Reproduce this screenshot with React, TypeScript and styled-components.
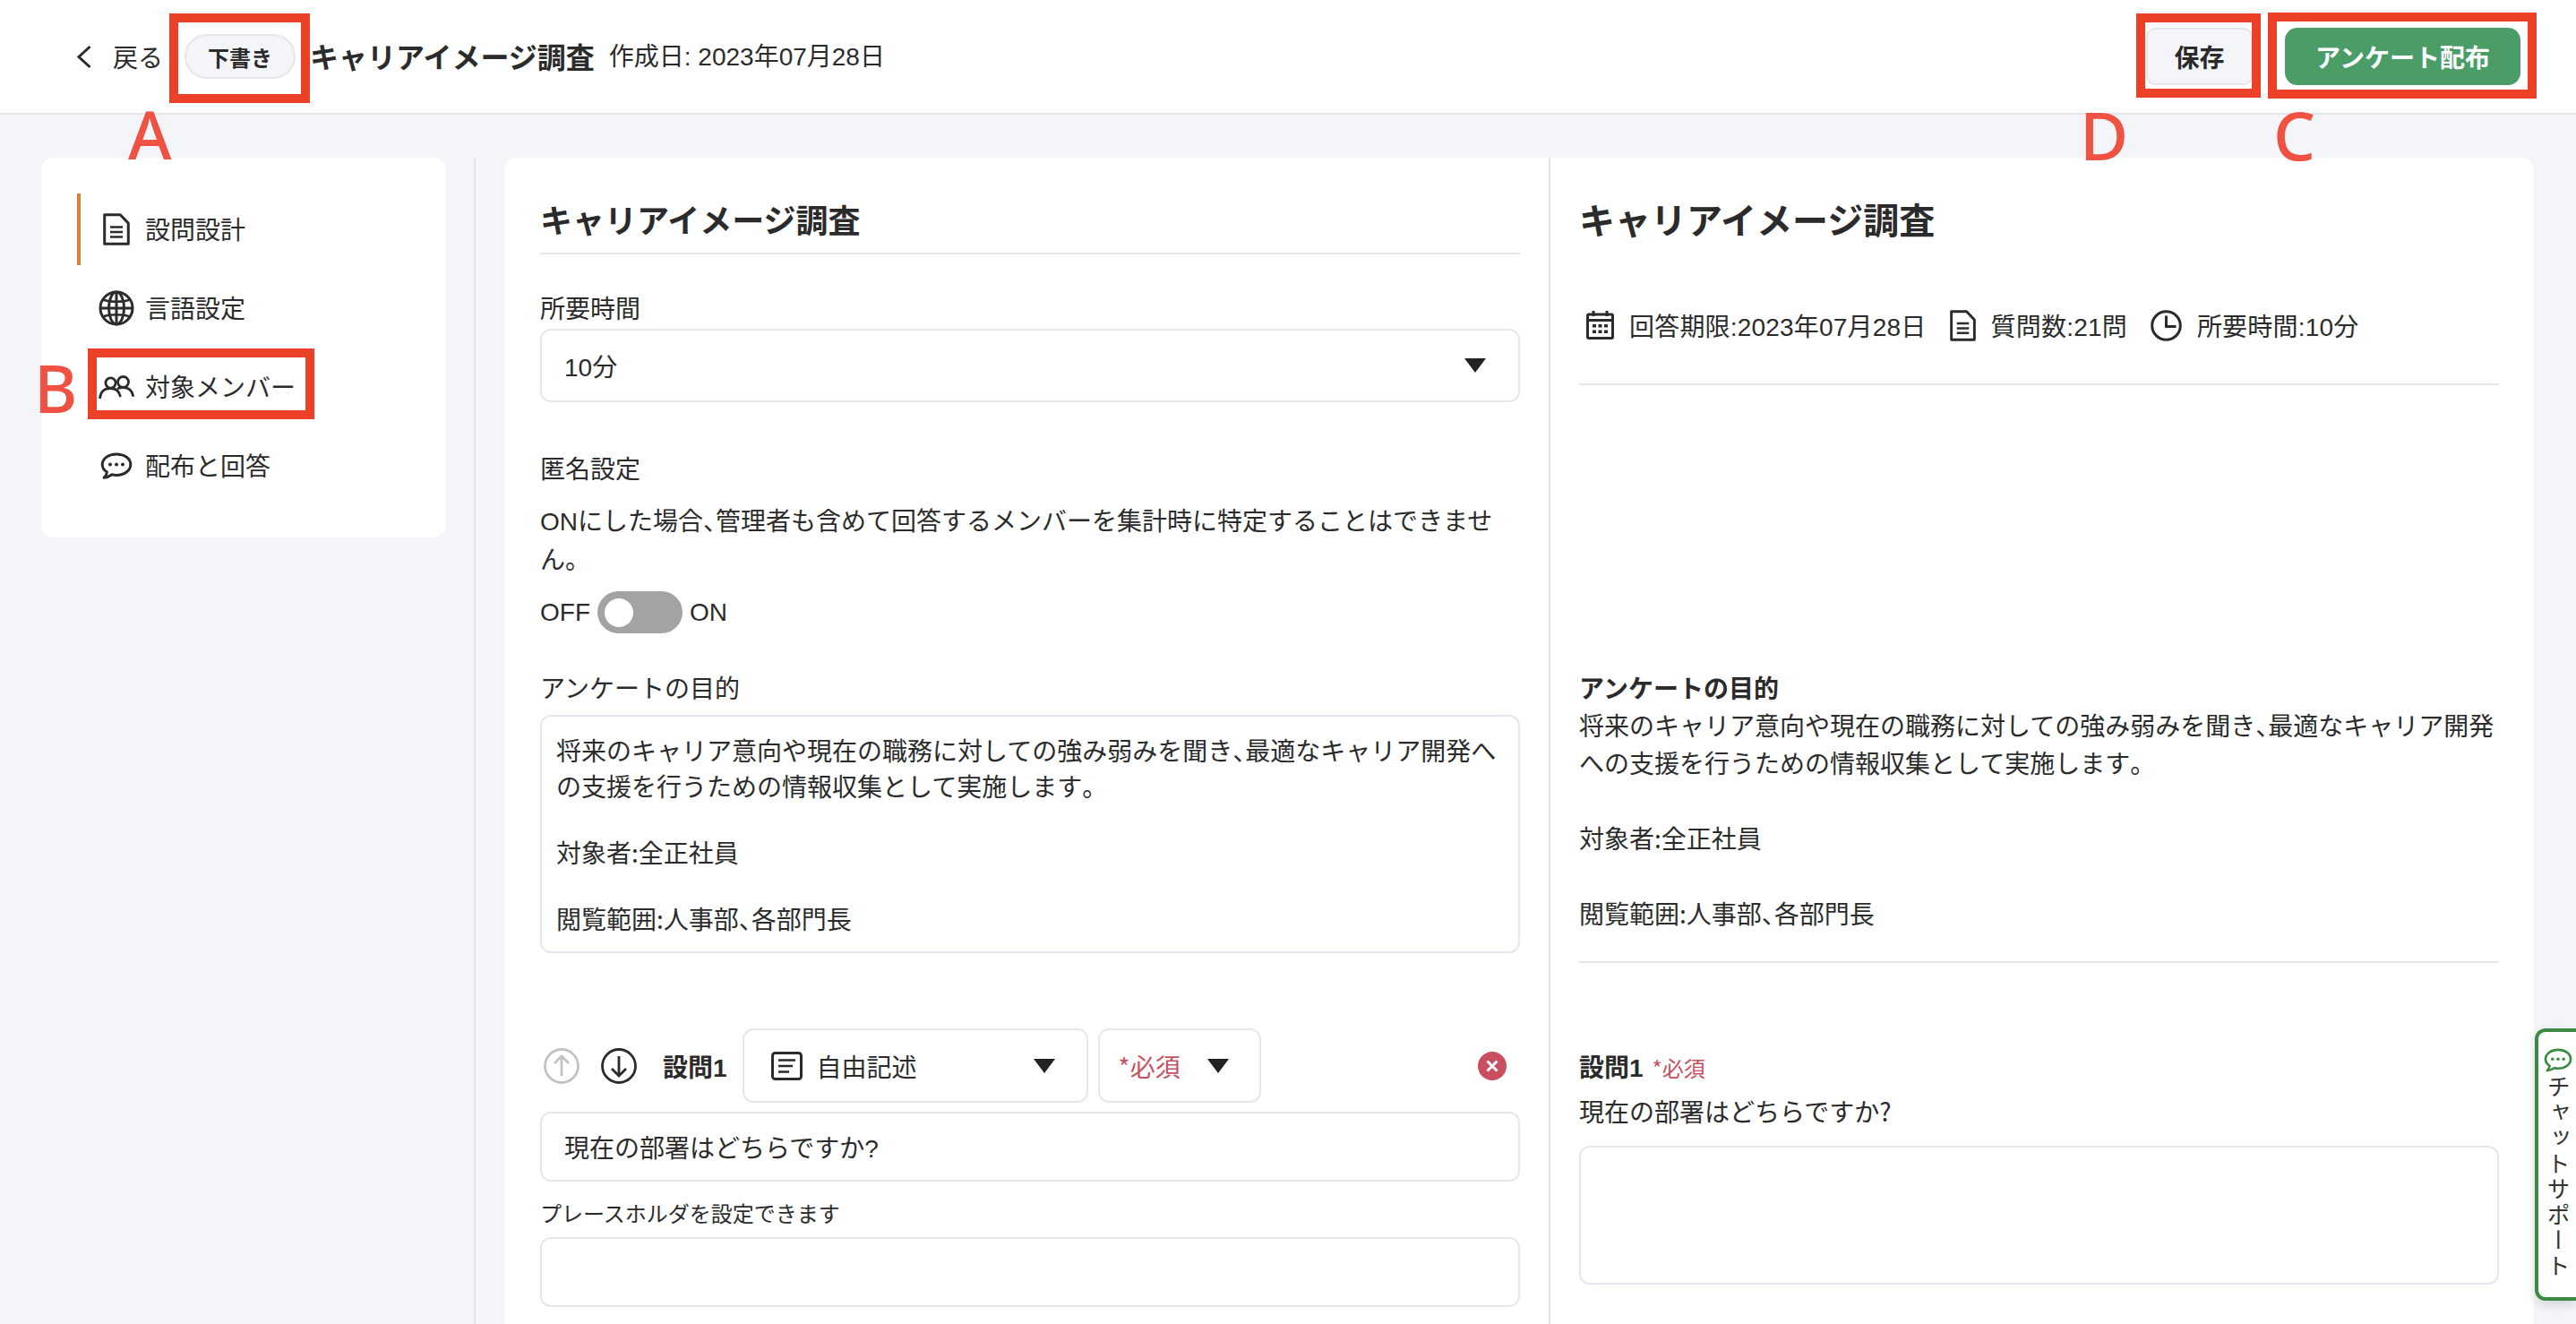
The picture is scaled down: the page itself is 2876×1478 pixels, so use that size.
import React from "react";
import styled, { createGlobalStyle } from "styled-components";

const JP = `"Noto Sans CJK JP", sans-serif`;
const LATIN = `"Liberation Sans", "Noto Sans CJK JP", sans-serif`;

const GlobalStyle = createGlobalStyle`
  html, body {
    margin: 0;
    padding: 0;
    background: #f4f5f9;
  }
  body {
    font-family: ${JP};
    font-size: 28px;
    color: #2b2b2b;
  }
  * {
    box-sizing: border-box;
  }
`;

const Page = styled.div`
  position: relative;
  width: 2876px;
  height: 1478px;
  overflow: hidden;
  background: #f4f5f9;
`;

/* header */
const Header = styled.header`
  display: flex;
  align-items: center;
  height: 128px;
  padding: 0 62px 0 85px;
  background: #ffffff;
  border-bottom: 2px solid #e5e6eb;
`;

const BackLink = styled.a`
  display: flex;
  align-items: center;
  gap: 23px;
  line-height: 40px;
  margin-right: 24px;
`;

const StatusPill = styled.span`
  display: flex;
  align-items: center;
  justify-content: center;
  width: 124px;
  height: 50px;
  margin-right: 16px;
  border: 2px solid #e5e6eb;
  border-radius: 25px;
  background: #f4f5f9;
  font-size: 24px;
  font-weight: 700;
`;

const HeaderTitle = styled.h1`
  margin: 0 16px 2px 0;
  font-size: 32px;
  line-height: 44px;
  font-weight: 700;
`;

const CreatedAt = styled.span`
  flex: 1;
  margin-top: 2px;
  font-family: ${LATIN};
  line-height: 44px;
`;

const SaveButton = styled.button`
  width: 119px;
  height: 64px;
  margin-right: 36px;
  border: 2px solid #e5e6eb;
  border-radius: 10px;
  background: #f4f5f9;
  color: #2b2b2b;
  font: 700 28px ${JP};
`;

const PublishButton = styled.button`
  width: 263px;
  height: 64px;
  border: 0;
  border-radius: 14px;
  background: #4a9d67;
  color: #ffffff;
  font: 700 28px ${JP};
`;

/* body */
const Body = styled.div`
  display: flex;
  height: 1350px;
  padding: 48px 47px 0 46px;
`;

const SideColumn = styled.aside`
  width: 485px;
  padding-right: 31px;
  border-right: 2px solid #e4e5ea;
  flex-shrink: 0;
`;

const SideCard = styled.nav`
  display: flex;
  flex-direction: column;
  gap: 8px;
  height: 424px;
  padding: 40px;
  background: #ffffff;
  border-radius: 14px;
`;

const SideItem = styled.a<{ $active?: boolean }>`
  display: flex;
  align-items: center;
  gap: 12px;
  height: 80px;
  padding-left: 20px;
  border-left: 4px solid ${(p) => (p.$active ? "#d97f3f" : "transparent")};
  white-space: nowrap;
`;

const SideIcon = styled.span`
  display: flex;
  align-items: center;
  justify-content: center;
  width: 40px;
  height: 40px;
`;

const SideLabel = styled.span`
  margin-bottom: 3px;
`;

const MainCard = styled.main`
  display: flex;
  flex: 1;
  margin-left: 32px;
  background: #ffffff;
  border-radius: 14px 14px 0 0;
`;

const EditColumn = styled.section`
  width: 1168px;
  padding: 43px 32px 0 40px;
  border-right: 2px solid #e4e5ea;
`;

const PreviewColumn = styled.section`
  flex: 1;
  padding: 43px 39px 0 32px;
`;

const EditTitle = styled.h2`
  margin: 0;
  padding-bottom: 13px;
  border-bottom: 2px solid #e5e6eb;
  font-size: 36px;
  line-height: 50px;
  font-weight: 700;
`;

const PreviewTitle = styled.h2`
  margin: 0;
  font-size: 40px;
  line-height: 50px;
  font-weight: 700;
`;

const Label = styled.div<{ $top: number }>`
  margin-top: ${(p) => p.$top}px;
  padding-bottom: 2px;
  line-height: 32px;
`;

const Field = styled.div<{ $top: number; $height: number }>`
  display: flex;
  align-items: center;
  justify-content: space-between;
  height: ${(p) => p.$height}px;
  margin-top: ${(p) => p.$top}px;
  padding: 0 36px 0 25px;
  border: 2px solid #e6e7ee;
  border-radius: 12px;
  background: #ffffff;
  font-family: ${LATIN};
`;

const Arrow = styled.span`
  width: 0;
  height: 0;
  border-left: 12.5px solid transparent;
  border-right: 12.5px solid transparent;
  border-top: 16px solid #222222;
`;

const Description = styled.p`
  margin: 19px 0 0;
  line-height: 43px;
`;

const Latin = styled.span`
  font-family: "Liberation Sans", sans-serif;
  line-height: 1;
`;

const ToggleRow = styled.div`
  display: flex;
  align-items: center;
  gap: 8px;
  height: 47px;
  margin-top: 15px;
  font-family: ${LATIN};
`;

const ToggleTrack = styled.span`
  display: flex;
  align-items: center;
  width: 95px;
  height: 47px;
  padding-left: 8px;
  border-radius: 24px;
  background: #a3a3a3;
`;

const ToggleKnob = styled.span`
  width: 32px;
  height: 32px;
  border-radius: 50%;
  background: #ffffff;
`;

const PurposeBox = styled.div`
  height: 266px;
  margin-top: 13px;
  padding: 17px 16px 0 16px;
  border: 2px solid #e6e7ee;
  border-radius: 12px;
`;

const PurposeLine = styled.p<{ $top?: number }>`
  margin: ${(p) => p.$top ?? 0}px 0 0;
  line-height: 40px;
`;

const QuestionRow = styled.div`
  display: flex;
  align-items: center;
  height: 83px;
  margin-top: 84px;
  padding-left: 4px;
`;

const MoveButton = styled.span`
  display: flex;
  width: 40px;
  height: 40px;
  margin-right: 24px;
`;

const QuestionNo = styled.strong`
  margin: 0 17px 0 5px;
  font-family: ${LATIN};
  font-weight: 700;
  white-space: nowrap;
`;

const RowSelect = styled.div<{ $width: number; $left: number; $right: number }>`
  display: flex;
  align-items: center;
  width: ${(p) => p.$width}px;
  height: 83px;
  padding: 0 ${(p) => p.$right}px 0 ${(p) => p.$left}px;
  margin-right: 11px;
  border: 2px solid #e6e7ee;
  border-radius: 12px;
`;

const RowSelectText = styled.span<{ $danger?: boolean; $indent?: number }>`
  flex: 1;
  margin-left: ${(p) => p.$indent ?? 0}px;
  color: ${(p) => (p.$danger ? "#c8505f" : "#2b2b2b")};
`;

const DeleteButton = styled.span`
  display: flex;
  margin-left: auto;
  margin-right: 15px;
`;

const PlaceholderLabel = styled.div`
  margin-top: 20px;
  font-size: 24px;
  line-height: 30px;
`;

/* preview side */
const MetaRow = styled.div`
  display: flex;
  align-items: center;
  height: 40px;
  margin: 74px 0 0 8px;
  font-family: ${LATIN};
  letter-spacing: 0.2px;
`;

const MetaItem = styled.span`
  display: flex;
  align-items: center;
  gap: 17px;
  margin-right: 26px;
  white-space: nowrap;
`;

const Rule = styled.hr<{ $top: number }>`
  margin: ${(p) => p.$top}px 0 0;
  border: 0;
  border-top: 2px solid #e5e6eb;
`;

const PreviewHeading = styled.h3`
  margin: 316px 0 0;
  font-size: 28px;
  line-height: 42px;
  font-weight: 700;
`;

const PreviewText = styled.p`
  margin: 0;
  line-height: 42px;
  white-space: pre-wrap;
`;

const PreviewQuestion = styled.div`
  display: flex;
  align-items: baseline;
  gap: 10px;
  height: 42px;
  margin-top: 95px;
  font-family: ${LATIN};
  font-weight: 700;
`;

const RequiredMark = styled.span`
  color: #c8505f;
  font-family: ${JP};
  font-size: 24px;
  font-weight: 400;
`;

const PreviewPrompt = styled.div`
  margin-top: 7px;
  line-height: 42px;
`;

const PreviewAnswer = styled.div`
  height: 155px;
  margin-top: 18px;
  border: 2px solid #e6e7ee;
  border-radius: 12px;
`;

/* half width punctuation, the reference font sets these narrow */
const Halt = styled.span`
  font-feature-settings: "halt";
`;

/* chat tab stuck to the right edge */
const ChatTab = styled.a`
  position: absolute;
  top: 1148px;
  right: 0;
  display: flex;
  flex-direction: column;
  align-items: center;
  gap: 3px;
  width: 46px;
  height: 304px;
  padding: 18px 0 0 2px;
  background: #ffffff;
  border: 4px solid #3c8a46;
  border-right: 0;
  border-radius: 12px 0 0 12px;
  box-shadow: 0 4px 12px rgba(0, 0, 0, 0.14);
`;

const ChatLabel = styled.span`
  writing-mode: vertical-rl;
  font-size: 26px;
  letter-spacing: 2.6px;
  line-height: 32px;
  color: #333333;
`;

/* red annotation marks drawn over the screenshot */
const MarkBox = styled.div<{ $x: number; $y: number; $w: number; $h: number }>`
  position: absolute;
  left: ${(p) => p.$x}px;
  top: ${(p) => p.$y}px;
  width: ${(p) => p.$w}px;
  height: ${(p) => p.$h}px;
  border: 10px solid #ec4127;
`;

const MarkLetter = styled.span<{ $x: number; $y: number }>`
  position: absolute;
  left: ${(p) => p.$x}px;
  top: ${(p) => p.$y}px;
  font-family: "Noto Sans", sans-serif;
  font-size: 74px;
  font-weight: 500;
  line-height: 74px;
  color: #ef5243;
`;

const ICON = "#2b2b2b";

const ChevronLeft = () => (
  <svg width="18" height="27" viewBox="0 0 18 27" fill="none">
    <path d="M15.5 2 3 13.5 15.5 25" stroke={ICON} strokeWidth="3" />
  </svg>
);

const DocIcon = ({ w = 30, h = 36 }: { w?: number; h?: number }) => (
  <svg width={w} height={h} viewBox="0 0 30 36" fill="none">
    <path
      d="M1.7 1.7h17.6l9 9.6v23H1.7z"
      stroke={ICON}
      strokeWidth="3"
      strokeLinejoin="round"
    />
    <path d="M8 15.5h14M8 21h14M8 26.5h14" stroke={ICON} strokeWidth="2.6" />
  </svg>
);

const GlobeIcon = () => (
  <svg width="40" height="40" viewBox="0 0 40 40" fill="none" stroke={ICON} strokeWidth="3">
    <circle cx="20" cy="20" r="18" />
    <ellipse cx="20" cy="20" rx="8.5" ry="18" />
    <path d="M20 2v36M2 20h36" />
    <path d="M5 10.5c8 3 22 3 30 0M5 29.5c8-3 22-3 30 0" strokeWidth="2.6" />
  </svg>
);

const MembersIcon = () => (
  <svg width="40" height="26" viewBox="0 0 40 26" fill="none" stroke={ICON} strokeWidth="2.8">
    <circle cx="13.5" cy="8.5" r="5.6" />
    <circle cx="27.5" cy="7.5" r="6" />
    <path d="M1.6 25c.6-6.5 5-10.5 11.6-10.5 5.8 0 9.8 3.3 11 8.5" strokeLinecap="round" />
    <path d="M22 14.5c1.7-.7 3.5-1 5.5-1 5.8 0 10 3.4 11 9" strokeLinecap="round" />
  </svg>
);

const ChatIcon = ({ color = ICON, w = 36, h = 30 }: { color?: string; w?: number; h?: number }) => (
  <svg width={w} height={h} viewBox="0 0 36 30" fill="none">
    <path
      d="M18 2C9 2 2.2 7.2 2.2 13.5c0 3.5 2 6.5 5.2 8.6-.3 2.4-1.3 4.4-3.2 6.1 3.2-.3 6.4-1.6 8.8-3.4 1.6.4 3.3.6 5 .6 9 0 15.8-5.2 15.8-11.9S27 2 18 2z"
      stroke={color}
      strokeWidth="3"
      strokeLinejoin="round"
    />
    <circle cx="11" cy="13.5" r="2" fill={color} />
    <circle cx="18" cy="13.5" r="2" fill={color} />
    <circle cx="25" cy="13.5" r="2" fill={color} />
  </svg>
);

const CalendarIcon = () => (
  <svg width="31" height="32" viewBox="0 0 31 32" fill="none">
    <rect x="1.5" y="4" width="28" height="26.5" rx="1.5" stroke={ICON} strokeWidth="3" />
    <path d="M1.5 10.5h28" stroke={ICON} strokeWidth="3" />
    <path d="M8 0v6M23 0v6" stroke={ICON} strokeWidth="3" />
    <path
      d="M7 15h4v3.5H7zM13.5 15h4v3.5h-4zM20 15h4v3.5h-4zM7 21.5h4V25H7zM13.5 21.5h4V25h-4zM20 21.5h4V25h-4z"
      fill={ICON}
    />
  </svg>
);

const ClockIcon = () => (
  <svg width="35" height="35" viewBox="0 0 35 35" fill="none" stroke={ICON} strokeWidth="3">
    <circle cx="17.5" cy="17.5" r="15.8" />
    <path d="M17.5 6.5v12h11" />
  </svg>
);

const ArrowCircle = ({ color, up }: { color: string; up?: boolean }) => (
  <svg width="40" height="40" viewBox="0 0 40 40" fill="none" stroke={color} strokeWidth="2.8">
    <circle cx="20" cy="20" r="18.5" />
    <path d={up ? "M20 31V9M12 17l8-8 8 8" : "M20 9v22M12 23l8 8 8-8"} />
  </svg>
);

const FreeTextIcon = () => (
  <svg width="35" height="32" viewBox="0 0 35 32" fill="none">
    <rect x="1.5" y="1.5" width="32" height="29" rx="3" stroke={ICON} strokeWidth="3" />
    <path d="M8 9.5h19M8 16h16M8 22.5h12" stroke={ICON} strokeWidth="2.6" />
  </svg>
);

const CloseCircle = () => (
  <svg width="32" height="32" viewBox="0 0 32 32">
    <circle cx="16" cy="16" r="16" fill="#c94f60" />
    <path d="M10.5 10.5l11 11M21.5 10.5l-11 11" stroke="#ffffff" strokeWidth="3" />
  </svg>
);

const App: React.FC = () => {
  return (
    <Page>
      <GlobalStyle />
      <Header>
        <BackLink>
          <ChevronLeft />
          戻る
        </BackLink>
        <StatusPill>下書き</StatusPill>
        <HeaderTitle>キャリアイメージ調査</HeaderTitle>
        <CreatedAt>作成日: 2023年07月28日</CreatedAt>
        <SaveButton>保存</SaveButton>
        <PublishButton>アンケート配布</PublishButton>
      </Header>

      <Body>
        <SideColumn>
          <SideCard>
            <SideItem $active>
              <SideIcon>
                <DocIcon />
              </SideIcon>
              <SideLabel>設問設計</SideLabel>
            </SideItem>
            <SideItem>
              <SideIcon>
                <GlobeIcon />
              </SideIcon>
              <SideLabel>言語設定</SideLabel>
            </SideItem>
            <SideItem>
              <SideIcon>
                <MembersIcon />
              </SideIcon>
              <SideLabel>対象メンバー</SideLabel>
            </SideItem>
            <SideItem>
              <SideIcon>
                <ChatIcon />
              </SideIcon>
              <SideLabel>配布と回答</SideLabel>
            </SideItem>
          </SideCard>
        </SideColumn>

        <MainCard>
          <EditColumn>
            <EditTitle>キャリアイメージ調査</EditTitle>

            <Label $top={43}>所要時間</Label>
            <Field $top={6} $height={82}>
              10分
              <Arrow />
            </Field>

            <Label $top={57}>匿名設定</Label>
            <Description>
              <Latin>ON</Latin>にした場合<Halt>、</Halt>管理者も含めて回答するメンバーを集計時に特定することはできません<Halt>。</Halt>
            </Description>
            <ToggleRow>
              OFF
              <ToggleTrack>
                <ToggleKnob />
              </ToggleTrack>
              ON
            </ToggleRow>

            <Label $top={44}>アンケートの目的</Label>
            <PurposeBox>
              <PurposeLine>
                将来のキャリア意向や現在の職務に対しての強み弱みを聞き<Halt>、</Halt>最適なキャリア開発への支援を行うための情報収集として実施します<Halt>。</Halt>
              </PurposeLine>
              <PurposeLine $top={34}>対象者:全正社員</PurposeLine>
              <PurposeLine $top={34}>
                閲覧範囲:人事部<Halt>、</Halt>各部門長
              </PurposeLine>
            </PurposeBox>

            <QuestionRow>
              <MoveButton>
                <ArrowCircle color="#c3c3c7" up />
              </MoveButton>
              <MoveButton>
                <ArrowCircle color={ICON} />
              </MoveButton>
              <QuestionNo>設問1</QuestionNo>
              <RowSelect $width={386} $left={30} $right={35}>
                <FreeTextIcon />
                <RowSelectText $indent={16}>自由記述</RowSelectText>
                <Arrow />
              </RowSelect>
              <RowSelect $width={182} $left={21} $right={34}>
                <RowSelectText $danger>*必須</RowSelectText>
                <Arrow />
              </RowSelect>
              <DeleteButton>
                <CloseCircle />
              </DeleteButton>
            </QuestionRow>

            <Field $top={10} $height={78}>
              現在の部署はどちらですか?
            </Field>
            <PlaceholderLabel>プレースホルダを設定できます</PlaceholderLabel>
            <Field $top={12} $height={78} />
          </EditColumn>

          <PreviewColumn>
            <PreviewTitle>キャリアイメージ調査</PreviewTitle>
            <MetaRow>
              <MetaItem>
                <CalendarIcon />
                回答期限:2023年07月28日
              </MetaItem>
              <MetaItem>
                <DocIcon w={29} h={35} />
                質問数:21問
              </MetaItem>
              <MetaItem>
                <ClockIcon />
                所要時間:10分
              </MetaItem>
            </MetaRow>
            <Rule $top={45} />

            <PreviewHeading>アンケートの目的</PreviewHeading>
            <PreviewText>
              将来のキャリア意向や現在の職務に対しての強み弱みを聞き<Halt>、</Halt>最適なキャリア開発への支援を行うための情報収集として実施します<Halt>。</Halt>
              {"\n\n"}対象者:全正社員{"\n\n"}閲覧範囲:人事部<Halt>、</Halt>各部門長
            </PreviewText>
            <Rule $top={33} />

            <PreviewQuestion>
              設問1
              <RequiredMark>*必須</RequiredMark>
            </PreviewQuestion>
            <PreviewPrompt>現在の部署はどちらですか?</PreviewPrompt>
            <PreviewAnswer />
          </PreviewColumn>
        </MainCard>
      </Body>

      <ChatTab>
        <ChatIcon color="#3c8a46" w={32} h={27} />
        <ChatLabel>チャットサポート</ChatLabel>
      </ChatTab>

      <MarkBox $x={189} $y={15} $w={157} $h={100} />
      <MarkBox $x={98} $y={389} $w={253} $h={79} />
      <MarkBox $x={2385} $y={15} $w={139} $h={94} />
      <MarkBox $x={2532} $y={14} $w={300} $h={96} />
      <MarkLetter $x={143} $y={113}>A</MarkLetter>
      <MarkLetter $x={38} $y={396}>B</MarkLetter>
      <MarkLetter $x={2538} $y={114}>C</MarkLetter>
      <MarkLetter $x={2322} $y={114}>D</MarkLetter>
    </Page>
  );
};

export default App;
